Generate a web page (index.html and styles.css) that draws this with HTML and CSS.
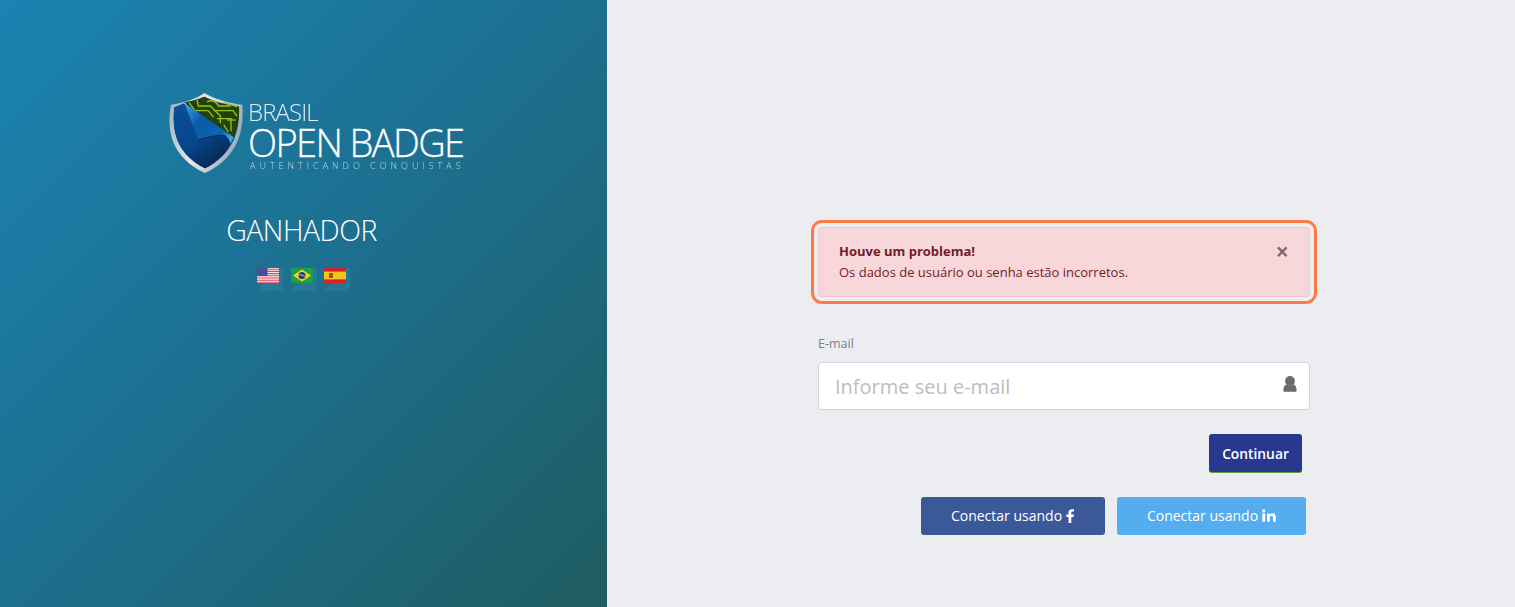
FILE: index.html
```html
<!DOCTYPE html>
<html lang="pt-BR">
<head>
  <meta charset="UTF-8">
  <meta name="viewport" content="width=device-width, initial-scale=1.0">
  <title>Brasil Open Badge</title>
  <link rel="stylesheet" href="styles.css">
</head>
<body>
  <div class="page">
    <!-- Left panel -->
    <aside class="side">
      <div class="logo">
        <svg class="shield" viewBox="0 0 255 270" width="85" height="90">
          <defs>
            <linearGradient id="rim" x1="0" y1="0" x2="1" y2="0.3">
              <stop offset="0" stop-color="#9fb0ba"/>
              <stop offset="0.5" stop-color="#e4e9ec"/>
              <stop offset="1" stop-color="#9fb0b8"/>
            </linearGradient>
            <linearGradient id="body" x1="0" y1="0" x2="0.6" y2="1">
              <stop offset="0" stop-color="#0a4f98"/>
              <stop offset="0.6" stop-color="#08468c"/>
              <stop offset="1" stop-color="#052a55"/>
            </linearGradient>
            <linearGradient id="fold" x1="0" y1="0" x2="1" y2="0.7">
              <stop offset="0" stop-color="#36ade8"/>
              <stop offset="0.4" stop-color="#0b5aa6"/>
              <stop offset="0.85" stop-color="#0d65b0"/>
              <stop offset="1" stop-color="#35a8e0"/>
            </linearGradient>
          </defs>
          <path d="M118 15C145 32 190 45 232 50C238 135 215 210 120 255C25 210 2 135 18 50C55 45 95 32 118 15Z" fill="url(#rim)"/>
          <path d="M118 26C145 40 185 51 222 56C225 130 205 198 120 241C35 198 20 130 28 58C60 52 95 40 118 26Z" fill="#0a4588"/>
          <path d="M58 43C80 38 100 34 118 26C145 40 185 51 222 56C224 88 218 118 206 148Z" fill="#25410a"/>
          <g fill="none" stroke="#93c41c" stroke-width="4">
            <path d="M72 44L90 68L130 68L146 88"/>
            <path d="M96 36L100 54L136 54L166 84L166 106"/>
            <path d="M126 42C138 34 156 40 160 54L196 54"/>
            <path d="M146 68L204 68L216 84"/>
            <path d="M156 92L198 92L198 130"/>
            <path d="M176 110L190 132"/>
            <path d="M176 44L216 56"/>
            <path d="M212 96L186 96"/>
          </g>
          <path d="M28 58C37 54 47 50 58 45L100 155C130 148 160 138 180 143C188 150 194 160 195 170C175 205 150 226 120 241C35 198 20 130 28 58Z" fill="url(#body)"/>
          <path d="M58 45L206 148L195 170C192 155 186 146 178 142C155 140 125 150 100 155Z" fill="url(#fold)"/>
          <path d="M100 155C125 150 155 140 178 142C186 146 192 155 195 170" fill="none" stroke="#08254a" stroke-width="3"/>
        </svg>
        <div class="logo-text">
          <span class="logo-top">BRASIL</span>
          <span class="logo-main">OPEN BADGE</span>
          <span class="logo-sub">AUTENTICANDO CONQUISTAS</span>
        </div>
      </div>

      <h2 class="role">GANHADOR</h2>

      <div class="flags">
        <a class="flag" href="#">
          <svg viewBox="0 0 22 15" width="22" height="15">
            <rect width="22" height="15" fill="#f4f0f0"/>
            <path d="M0 1.2h22M0 3.4h22M0 5.6h22M0 7.8h22M0 10h22M0 12.2h22M0 14.2h22" stroke="#d5475a" stroke-width="1.1"/>
            <rect width="10.5" height="8" fill="#4a4f94"/>
          </svg>
        </a>
        <a class="flag" href="#">
          <svg viewBox="0 0 22 15" width="22" height="15">
            <rect width="22" height="15" fill="#1f9c4c"/>
            <path d="M11 1.5L20 7.5L11 13.5L2 7.5Z" fill="#f5d90f"/>
            <circle cx="11" cy="7.5" r="3.6" fill="#1d3f86"/>
            <path d="M7.6 6.8C10 6.6 12.5 7.4 14.3 8.8" fill="none" stroke="#fff" stroke-width="0.7"/>
          </svg>
        </a>
        <a class="flag" href="#">
          <svg viewBox="0 0 22 15" width="22" height="15">
            <rect width="22" height="15" fill="#d3202c"/>
            <rect y="3.6" width="22" height="7.8" fill="#f6c51a"/>
            <rect x="5" y="5" width="4" height="5" rx="1" fill="#b5432a"/>
          </svg>
        </a>
      </div>
    </aside>

    <!-- Login form -->
    <main class="content">
      <div class="login">
        <div class="alert">
          <div class="alert-text">
            <strong>Houve um problema!</strong>
            <span>Os dados de usuário ou senha estão incorretos.</span>
          </div>
          <button class="close" type="button">×</button>
        </div>

        <label class="field-label" for="email">E-mail</label>
        <div class="field">
          <input id="email" type="text" placeholder="Informe seu e-mail">
          <svg class="field-icon" viewBox="0 0 14 16" width="14" height="16">
            <circle cx="7" cy="5" r="4.9" fill="#6b6b6b"/>
            <path d="M1.6 15.7C0.8 15.7 0.4 15.2 0.4 14.4C0.4 11.8 1.2 9 3.4 8.4C4.4 9.2 5.6 9.6 7 9.6C8.4 9.6 9.6 9.2 10.6 8.4C12.8 9 13.6 11.8 13.6 14.4C13.6 15.2 13.2 15.7 12.4 15.7Z" fill="#6b6b6b"/>
          </svg>
        </div>

        <div class="actions">
          <button class="btn btn-primary" type="button">Continuar</button>
        </div>

        <div class="social">
          <a class="btn btn-fb" href="#">Conectar usando
            <svg viewBox="0 0 9 14" width="9" height="14"><path d="M2.5 14V8H0.3V5.6H2.5V3.8C2.5 1.5 3.9 0.3 5.9 0.3C6.9 0.3 7.7 0.4 8 0.4V2.6H6.6C5.5 2.6 5.3 3.1 5.3 3.9V5.6H7.9L7.6 8H5.3V14Z" fill="#fff"/></svg>
          </a>
          <a class="btn btn-li" href="#">Conectar usando
            <svg viewBox="0 0 14 13" width="14" height="13"><circle cx="1.7" cy="1.9" r="1.6" fill="#fff"/><path d="M0.3 4.4H3.1V12.8H0.3ZM5 4.4H7.6V5.6C8.1 4.8 9.1 4.2 10.4 4.2C13 4.2 13.8 5.9 13.8 8.2V12.8H11V8.7C11 7.6 10.7 6.7 9.6 6.7C8.4 6.7 7.8 7.5 7.8 8.7V12.8H5Z" fill="#fff"/></svg>
          </a>
        </div>
      </div>
    </main>
  </div>
</body>
</html>
```

FILE: styles.css
```css
/* Basic page */
html, body {
  margin: 0;
  padding: 0;
  height: 100%;
  overflow: hidden;
  font-family: "Open Sans", Arial, sans-serif;
  background-color: #ecedf1;
}
.page {
  display: flex;
  height: 607px;
}

/* Left panel */
.side {
  width: 607px;
  flex-shrink: 0;
  background: linear-gradient(135deg, #1a83b2 0%, #1d6f8e 50%, #1f5c60 100%);
  display: flex;
  flex-direction: column;
  align-items: center;
  padding-top: 88px;
  box-sizing: border-box;
}
.logo {
  display: flex;
  align-items: flex-start;
  align-self: flex-start;
  margin-left: 165px;
  color: #fff;
}
.shield {
  display: block;
  margin-right: -2px;
}
.logo-text {
  display: flex;
  flex-direction: column;
  padding-top: 11px;
}
.logo-top {
  font-size: 24px;
  font-weight: 300;
  line-height: 26px;
  letter-spacing: -0.9px;
  opacity: 0.85;
}
.logo-main {
  font-size: 38px;
  font-weight: 300;
  line-height: 35px;
  letter-spacing: -1.6px;
  white-space: nowrap;
  -webkit-text-stroke: 0.3px #fff;
}
.logo-sub {
  font-size: 9px;
  line-height: 12px;
  font-weight: 300;
  letter-spacing: 4px;
  margin-left: 2px;
  white-space: nowrap;
  opacity: 0.7;
}
.role {
  margin: 33px 4px 0 0;
  font-size: 28.5px;
  font-weight: 300;
  line-height: 38px;
  letter-spacing: -0.5px;
  color: #fff;
}
.flags {
  display: flex;
  gap: 7.5px;
  margin-top: 19px;
}
.flag {
  display: block;
  width: 26px;
  height: 23px;
  background: linear-gradient(135deg, rgba(255,255,255,0) 45%, rgba(255,255,255,0.05) 46%);
}
.flag svg {
  display: block;
  filter: blur(0.3px);
}

/* Form */
.content {
  flex: 1;
  padding: 227px 0 0 211px;
  box-sizing: border-box;
}
.login {
  width: 492px;
}
.alert {
  display: flex;
  justify-content: space-between;
  align-items: flex-start;
  height: 70px;
  box-sizing: border-box;
  padding: 13px 20px;
  background-color: #f8d7da;
  border: 1px solid #f5c6cb;
  border-radius: 4px;
  outline: 3px solid #ff7a45;
  outline-offset: 4px;
  color: #721c24;
  font-size: 13px;
}
.alert-text strong {
  display: block;
  line-height: 20px;
}
.alert-text span {
  display: block;
  line-height: 22px;
}
.close {
  border: none;
  background: none;
  padding: 0;
  margin: -1px 0 0 0;
  font-family: inherit;
  font-size: 23px;
  font-weight: 700;
  line-height: 22px;
  color: #000;
  opacity: 0.5;
  cursor: pointer;
}
.field-label {
  display: block;
  margin-top: 37px;
  padding-top: 1px;
  font-size: 12.5px;
  line-height: 18px;
  color: #7d7d7d;
}
.field {
  position: relative;
  margin-top: 9px;
}
.field input {
  display: block;
  width: 100%;
  height: 48px;
  box-sizing: border-box;
  padding: 0 16px;
  background: #fff;
  border: 1px solid #ced4da;
  border-radius: 4px;
  font-family: inherit;
  font-size: 20px;
}
.field input::placeholder {
  color: #bdbdbd;
  opacity: 1;
}
.field-icon {
  position: absolute;
  top: 14px;
  right: 13px;
}
.actions {
  display: flex;
  justify-content: flex-end;
  padding-right: 8px;
  margin-top: 24px;
}
.btn {
  display: flex;
  align-items: center;
  justify-content: center;
  gap: 4px;
  box-sizing: border-box;
  border-radius: 3px;
  border: none;
  color: #fff;
  font-family: inherit;
  font-size: 14px;
  text-decoration: none;
  cursor: pointer;
}
.btn-primary {
  width: 93px;
  height: 39px;
  padding-top: 1px;
  background-color: #29388f;
  border-bottom: 1px solid #5f9e3a;
  font-size: 13.8px;
  font-weight: 600;
}
.social {
  display: flex;
  justify-content: flex-end;
  gap: 12px;
  padding-right: 4px;
  margin-top: 24px;
}
.btn-fb {
  width: 184px;
  height: 38px;
  padding-bottom: 1px;
  background-color: #3b5998;
}
.btn-li {
  width: 189px;
  height: 38px;
  padding-bottom: 1px;
  background-color: #55acee;
}
```
